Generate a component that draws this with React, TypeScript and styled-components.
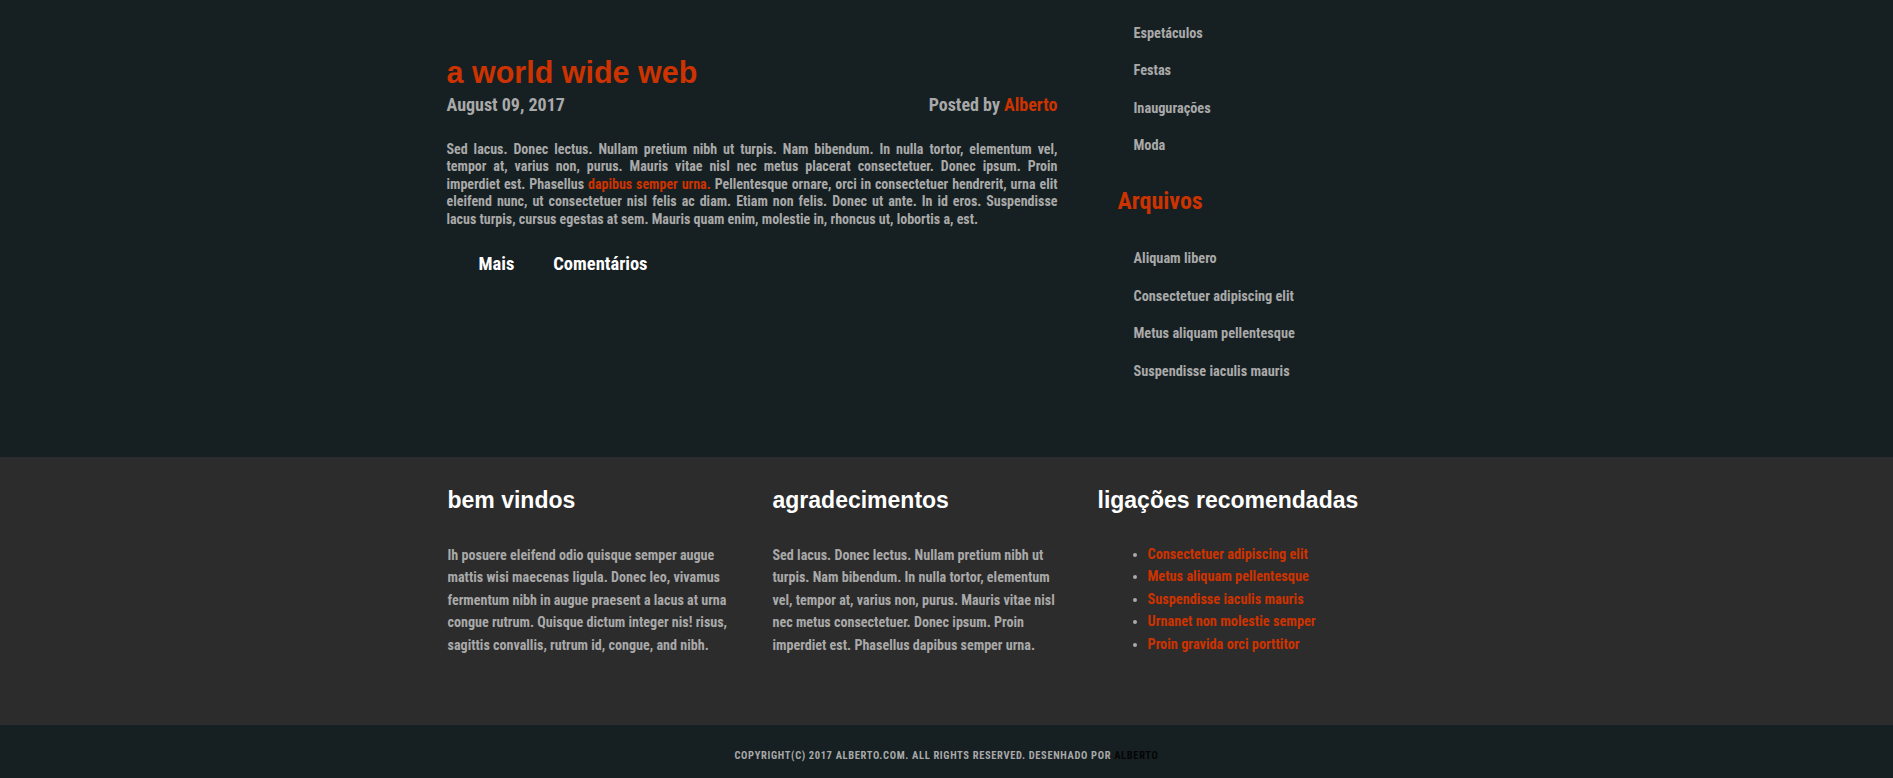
import React from "react";
import styled, { createGlobalStyle } from "styled-components";

const RED = "#cc3300";
const GREY = "#a9a9a9";
const NARROW = `"Roboto Condensed", "Roboto", "Liberation Sans", sans-serif`;
const WIDE = `"Liberation Sans", Arial, sans-serif`;

const Global = createGlobalStyle`
  html, body { margin: 0; padding: 0; background: #162022; }
  body { font-family: ${NARROW}; }
  * { box-sizing: border-box; }
`;

const Top = styled.section`
  background: #162022;
  height: 457px;
`;

const Container = styled.div`
  width: 1000px;
  margin: 0 auto;
`;

const TopGrid = styled(Container)`
  display: grid;
  grid-template-columns: 611px 1fr;
  column-gap: 60px;
`;

const Post = styled.article`
  padding-top: 54px;
`;

const PostTitle = styled.h1`
  margin: 0;
  font-family: ${WIDE};
  font-size: 30.5px;
  line-height: 36px;
  font-weight: 700;
  color: ${RED};
`;

const Meta = styled.div`
  display: flex;
  justify-content: space-between;
  margin-top: 3px;
  font-size: 18px;
  line-height: 24px;
  font-weight: 700;
  color: ${GREY};
`;

const Red = styled.a`
  color: ${RED};
  text-decoration: none;
`;

const Body = styled.p`
  margin: 24px 0 0;
  font-size: 14px;
  line-height: 17.4px;
  font-weight: 700;
  color: ${GREY};
  text-align: justify;
`;

const Links = styled.div`
  display: flex;
  gap: 39px;
  padding-left: 32px;
  margin-top: 25px;
`;

const PostLink = styled.a`
  color: #ffffff;
  font-size: 18.5px;
  font-weight: 700;
  line-height: 22px;
  text-decoration: none;
`;

const Sidebar = styled.aside`
  padding-top: 23.5px;
`;

const SideList = styled.ul`
  list-style: none;
  margin: 0;
  padding: 0 0 0 16px;
`;

const SideItem = styled.li`
  font-size: 14.3px;
  font-weight: 700;
  line-height: 18px;
  padding-bottom: 19.5px;
  color: ${GREY};
`;

const SideHeading = styled.h2`
  margin: 12.5px 0 33px;
  font-size: 24px;
  line-height: 30px;
  font-weight: 700;
  color: ${RED};
`;

const Middle = styled.section`
  background: #2c2c2c;
  height: 268px;
`;

const Cols = styled(Container)`
  display: grid;
  grid-template-columns: 290px 290px 290px;
  column-gap: 35px;
  padding-top: 29px;
  padding-left: 1px;
`;

const Col = styled.div``;

const ColTitle = styled.h2`
  margin: 0;
  font-family: ${WIDE};
  font-size: 23px;
  line-height: 28px;
  font-weight: 700;
  color: #ffffff;
  white-space: nowrap;
`;

const ColText = styled.p`
  margin: 29.5px 0 0;
  font-size: 14.1px;
  line-height: 22.6px;
  font-weight: 700;
  color: ${GREY};
`;

const RecList = styled.ul`
  margin: 29px 0 0;
  padding: 0 0 0 50px;
  color: ${GREY};
  font-size: 14.3px;
  line-height: 22.4px;
  font-weight: 700;
`;

const RecItem = styled.li`
  color: ${GREY};
`;

const Footer = styled.footer`
  background: #162022;
  height: 53px;
  padding-top: 23px;
  text-align: center;
  font-size: 10.5px;
  letter-spacing: 0.65px;
  line-height: 16px;
  font-weight: 700;
  text-transform: uppercase;
  color: ${GREY};
`;

const Dark = styled.a`
  color: #050505;
  text-decoration: none;
`;

const recs = [
  "Consectetuer adipiscing elit",
  "Metus aliquam pellentesque",
  "Suspendisse iaculis mauris",
  "Urnanet non molestie semper",
  "Proin gravida orci porttitor",
];

export default function App() {
  return (
    <>
      <Global />
      <Top>
        <TopGrid>
          <Post>
            <PostTitle>a world wide web</PostTitle>
            <Meta>
              <span>August 09, 2017</span>
              <span>
                Posted by <Red href="#">Alberto</Red>
              </span>
            </Meta>
            <Body>
              Sed lacus. Donec lectus. Nullam pretium nibh ut turpis. Nam bibendum. In nulla tortor, elementum vel,
              tempor at, varius non, purus. Mauris vitae nisl nec metus placerat consectetuer. Donec ipsum. Proin
              imperdiet est. Phasellus <Red href="#">dapibus semper urna.</Red> Pellentesque ornare, orci in
              consectetuer hendrerit, urna elit eleifend nunc, ut consectetuer nisl felis ac diam. Etiam non felis.
              Donec ut ante. In id eros. Suspendisse lacus turpis, cursus egestas at sem. Mauris quam enim, molestie
              in, rhoncus ut, lobortis a, est.
            </Body>
            <Links>
              <PostLink href="#">Mais</PostLink>
              <PostLink href="#">Comentários</PostLink>
            </Links>
          </Post>
          <Sidebar>
            <SideList>
              <SideItem>Espetáculos</SideItem>
              <SideItem>Festas</SideItem>
              <SideItem>Inaugurações</SideItem>
              <SideItem>Moda</SideItem>
            </SideList>
            <SideHeading>Arquivos</SideHeading>
            <SideList>
              <SideItem>Aliquam libero</SideItem>
              <SideItem>Consectetuer adipiscing elit</SideItem>
              <SideItem>Metus aliquam pellentesque</SideItem>
              <SideItem>Suspendisse iaculis mauris</SideItem>
            </SideList>
          </Sidebar>
        </TopGrid>
      </Top>
      <Middle>
        <Cols>
          <Col>
            <ColTitle>bem vindos</ColTitle>
            <ColText>
              Ih posuere eleifend odio quisque semper augue mattis wisi maecenas ligula. Donec leo, vivamus
              fermentum nibh in augue praesent a lacus at urna congue rutrum. Quisque dictum integer nis! risus,
              sagittis convallis, rutrum id, congue, and nibh.
            </ColText>
          </Col>
          <Col>
            <ColTitle>agradecimentos</ColTitle>
            <ColText>
              Sed lacus. Donec lectus. Nullam pretium nibh ut turpis. Nam bibendum. In nulla tortor, elementum vel,
              tempor at, varius non, purus. Mauris vitae nisl nec metus consectetuer. Donec ipsum. Proin imperdiet
              est. Phasellus dapibus semper urna.
            </ColText>
          </Col>
          <Col>
            <ColTitle>ligações recomendadas</ColTitle>
            <RecList>
              {recs.map((t) => (
                <RecItem key={t}>
                  <Red href="#">{t}</Red>
                </RecItem>
              ))}
            </RecList>
          </Col>
        </Cols>
      </Middle>
      <Footer>
        Copyright(c) 2017 alberto.com. All rights reserved. Desenhado por <Dark href="#">Alberto</Dark>
      </Footer>
    </>
  );
}
